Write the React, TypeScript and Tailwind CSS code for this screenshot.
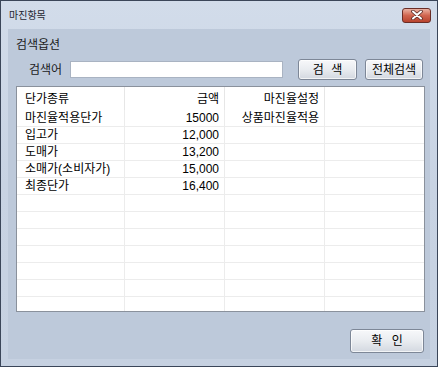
import React from "react";

const F = { fontFamily: '"Liberation Sans", "Noto Sans CJK KR", sans-serif' };

const rows: [string, string, string][] = [
  ["마진율적용단가", "15000", "상품마진율적용"],
  ["입고가", "12,000", ""],
  ["도매가", "13,200", ""],
  ["소매가(소비자가)", "15,000", ""],
  ["최종단가", "16,400", ""],
  ["", "", ""],
  ["", "", ""],
  ["", "", ""],
  ["", "", ""],
  ["", "", ""],
  ["", "", ""],
  ["", "", ""],
];

function Btn({ children, className }: { children: React.ReactNode; className: string }) {
  return (
    <div
      className={
        "flex items-center justify-center rounded-[3px] border border-[#7d8797] bg-gradient-to-b from-[#f7f8fa] via-[#e9ecf0] to-[#d3d8e0] text-[12px] text-black shadow-[inset_0_0_0_1px_rgba(255,255,255,0.7)] " +
        className
      }
    >
      {children}
    </div>
  );
}

export default function App() {
  return (
    <div
      style={F}
      className="w-[438px] h-[367px] border border-[#3b4659] bg-gradient-to-b from-[#d2dcea] via-[#c8d3e3] to-[#c6d1e1] flex flex-col overflow-hidden"
    >
      {/* title bar */}
      <div className="h-[28px] flex items-center justify-between pl-[8px] pr-[6px] pt-[2px]">
        <span className="text-[10px] text-[#1e2530] leading-none">마진항목</span>
        <div className="w-[29px] h-[15px] mb-[2px] rounded-[3px] border border-[#6a2d26] bg-gradient-to-b from-[#eab2a3] via-[#d0654f] to-[#b8432e] flex items-center justify-center">
          <svg width="14" height="10" viewBox="0 0 14 10">
            <path d="M3 1.5 L11 8.5 M11 1.5 L3 8.5" stroke="#5a2a24" strokeWidth="3.6" strokeLinecap="round" />
            <path d="M3 1.5 L11 8.5 M11 1.5 L3 8.5" stroke="#ffffff" strokeWidth="2" strokeLinecap="round" />
          </svg>
        </div>
      </div>

      {/* client area */}
      <div className="ml-[7px] mr-[7px] h-[330px] bg-[#bdc9da] flex flex-col pl-[8px] pr-[5px]">
        <div className="h-[30px] pt-[9px] text-[12px] leading-[14px] text-[#1a1a1a]">검색옵션</div>
        <div className="h-[21px] flex items-center">
          <span className="ml-[13px] w-[41px] text-[12px] text-[#1a1a1a]">검색어</span>
          <div className="w-[213px] h-[17px] bg-white border border-[#a9b3c2]" />
          <Btn className="ml-[15px] w-[59px] h-[21px] tracking-[2px] pl-[2px]">검 색</Btn>
          <Btn className="ml-[8px] w-[58px] h-[21px]">전체검색</Btn>
        </div>

        {/* grid */}
        <div className="mt-[6px] w-[409px] h-[226px] border border-[#8a919c] bg-white overflow-hidden text-[12px] text-black">
          <div className="h-[23px] flex">
            <div className="w-[108px] h-full border-r border-[#e6e6e6] pl-[8px] flex items-center">단가종류</div>
            <div className="w-[100px] h-full border-r border-[#e6e6e6] pr-[5px] flex items-center justify-end">금액</div>
            <div className="w-[100px] h-full border-r border-[#e6e6e6] pr-[5px] flex items-center justify-end">마진율설정</div>
            <div className="flex-1" />
          </div>
          {rows.map((r, i) => (
            <div key={i} className="h-[17px] flex border-b border-[#ececec]">
              <div className="w-[108px] h-full border-r border-[#ececec] pl-[8px] flex items-center whitespace-nowrap">{r[0]}</div>
              <div className="w-[100px] h-full border-r border-[#ececec] pr-[5px] flex items-center justify-end">{r[1]}</div>
              <div className="w-[100px] h-full border-r border-[#ececec] pr-[5px] flex items-center justify-end whitespace-nowrap">{r[2]}</div>
              <div className="flex-1" />
            </div>
          ))}
        </div>

        <div className="flex justify-end mt-[17px] pr-[1px]">
          <Btn className="w-[74px] h-[24px] tracking-[3px] pl-[3px]">확 인</Btn>
        </div>
      </div>
    </div>
  );
}
